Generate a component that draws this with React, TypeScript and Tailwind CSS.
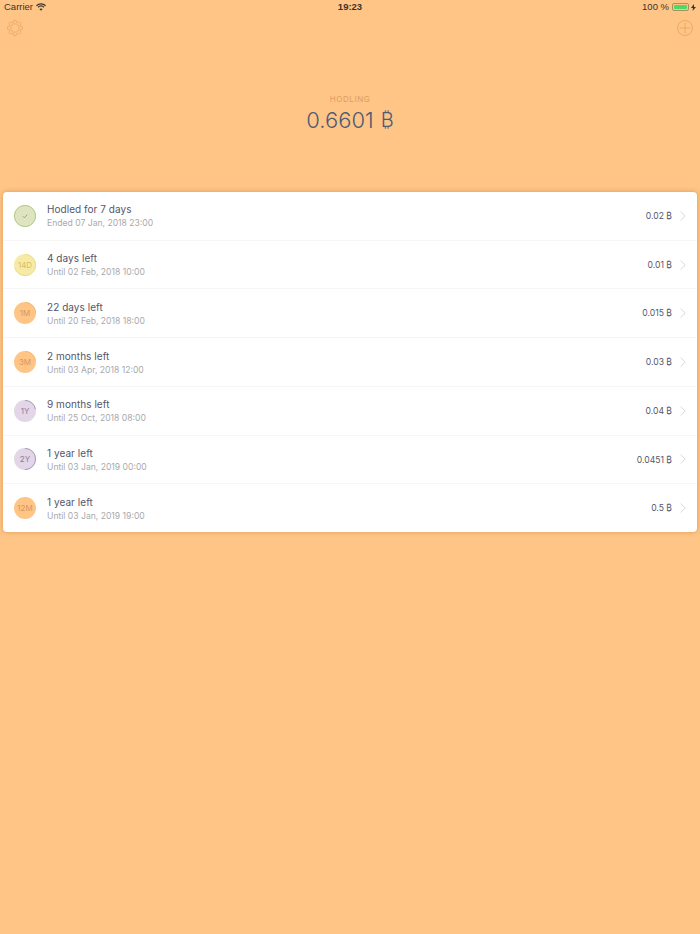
const rows = [
  { t: "Hodled for 7 days", s: "Ended 07 Jan, 2018 23:00", a: "0.02", l: "", fill: "#dde4bf", stroke: "#a9c47e", txt: "#8aa862", p: 1 },
  { t: "4 days left", s: "Until 02 Feb, 2018 10:00", a: "0.01", l: "14D", fill: "#f7eaa8", stroke: "#ecd97a", txt: "#d9bf5a", p: 0.7 },
  { t: "22 days left", s: "Until 20 Feb, 2018 18:00", a: "0.015", l: "1M", fill: "#fec587", stroke: "#f5b470", txt: "#d9975a", p: 0.25 },
  { t: "2 months left", s: "Until 03 Apr, 2018 12:00", a: "0.03", l: "3M", fill: "#fec587", stroke: "#f5b470", txt: "#d9975a", p: 0.22 },
  { t: "9 months left", s: "Until 25 Oct, 2018 08:00", a: "0.04", l: "1Y", fill: "#e3d6e8", stroke: "#9c8aab", txt: "#8d7a9c", p: 0.22 },
  { t: "1 year left", s: "Until 03 Jan, 2019 00:00", a: "0.0451", l: "2Y", fill: "#e3d6e8", stroke: "#9c8aab", txt: "#8d7a9c", p: 0.5 },
  { t: "1 year left", s: "Until 03 Jan, 2019 19:00", a: "0.5", l: "12M", fill: "#fec587", stroke: "#f5b470", txt: "#d9975a", p: 0.02 },
];

const gearPath = (() => {
  const pts: string[] = [];
  for (let i = 0; i < 8; i++) {
    const a = (i * Math.PI) / 4;
    const step = Math.PI / 4;
    [
      [-0.36, 5.9],
      [-0.2, 7.6],
      [0.2, 7.6],
      [0.36, 5.9],
    ].forEach(([f, rad]) => {
      const t = a + f * step;
      pts.push(`${(8 + rad * Math.sin(t)).toFixed(2)} ${(8 - rad * Math.cos(t)).toFixed(2)}`);
    });
  }
  return `M${pts.join("L")}Z`;
})();

function Badge({ r }: { r: (typeof rows)[number] }) {
  const c = 2 * Math.PI * 10.6;
  return (
    <div className="relative w-[22px] h-[22px] shrink-0">
      <svg width="22" height="22" viewBox="0 0 22 22" className="absolute inset-0">
        <circle cx="11" cy="11" r="11" fill={r.fill} />
        <circle
          cx="11"
          cy="11"
          r="10.6"
          fill="none"
          stroke={r.stroke}
          strokeWidth="0.8"
          strokeDasharray={`${c * r.p} ${c}`}
          transform="rotate(-90 11 11)"
        />
        {r.l === "" && <path d="M8.8 11.2l1.6 1.6 2.9-3.2" fill="none" stroke={r.txt} strokeWidth="0.9" />}
      </svg>
      <div className="absolute inset-0 flex items-center justify-center text-[8px]" style={{ color: r.txt }}>
        {r.l}
      </div>
    </div>
  );
}

export default function App() {
  return (
    <div className="w-[700px] h-[934px] bg-[#fec587] overflow-hidden flex flex-col font-['Inter','Liberation_Sans',sans-serif]">
      <div className="h-[14px] px-[4px] flex items-center justify-between text-[9.5px] text-[#3a3330] font-['Liberation_Sans',sans-serif] relative">
        <div className="flex items-center gap-[3px]">
          <span>Carrier</span>
          <svg width="10" height="8" viewBox="0 0 10 8" fill="none" stroke="#3a3330">
            <path d="M.4 2.7C3 .2 7 .2 9.6 2.7" strokeWidth="1.2" />
            <path d="M2 4.3c1.7-1.5 4.3-1.5 6 0" strokeWidth="1.2" />
            <path d="M5 7.7L3.4 6c.9-.8 2.3-.8 3.2 0z" fill="#3a3330" stroke="none" />
          </svg>
        </div>
        <span className="absolute left-0 right-0 text-center font-bold">19:23</span>
        <div className="flex items-center gap-[2px]">
          <span>100 %</span>
          <div className="w-[17px] h-[8px] rounded-[2px] border border-[#a9905f] p-[1px] ml-[1px]">
            <div className="w-full h-full bg-[#4cd964] rounded-[1px]" />
          </div>
          <svg width="5" height="7" viewBox="0 0 5 7">
            <path d="M3 0L0 4h2L1.5 7 5 3H3z" fill="#3a3330" />
          </svg>
        </div>
      </div>
      <div className="h-[28px] px-[7px] flex items-center justify-between">
        <svg width="16" height="16" viewBox="0 0 16 16" fill="none" stroke="#e8a25a" strokeWidth="0.7">
          <path d={gearPath} strokeLinejoin="round" />
          <circle cx="8" cy="8" r="4.2" />
        </svg>
        <svg width="16" height="16" viewBox="0 0 16 16" fill="none" stroke="#e8a25a" strokeWidth="0.8">
          <circle cx="8" cy="8" r="7.5" />
          <path d="M8 2.5v11M2.5 8h11" />
        </svg>
      </div>
      <div className="mt-[51px] flex flex-col items-center">
        <div className="text-[8px] leading-[12px] tracking-[0.6px] text-[#dd9e5e]">HODLING</div>
        <div className="text-[22px] leading-[28px] mt-[1px] text-[#4f5a73] font-light flex items-center gap-[7px]">
          <span>0.6601</span>
          <span className="text-[20px]">₿</span>
        </div>
      </div>
      <div className="mt-[58px] mx-[3px] h-[340px] bg-white rounded-[4px] shadow-[0_0_5px_rgba(190,120,50,0.55)] flex flex-col">
        {rows.map((r, i) => (
          <div key={i} className={`flex-1 flex items-center px-[11px] ${i < 6 ? "border-b border-[#f6f6f6]" : ""}`}>
            <Badge r={r} />
            <div className="ml-[11px] flex-1 min-w-0 pt-[1px]">
              <div className="text-[10px] leading-[13px] text-[#55566a] tracking-[0.05px]">{r.t}</div>
              <div className="text-[8.6px] leading-[12px] mt-[1px] text-[#a9a9ad]">{r.s}</div>
            </div>
            <div className="text-[8.6px] text-[#55566a] mr-[8px] pt-[1px]">{r.a} ₿</div>
            <svg width="6" height="10" viewBox="0 0 6 10" fill="none" stroke="#d8d8d8" strokeWidth="1">
              <path d="M.7.5L5.2 5 .7 9.5" />
            </svg>
          </div>
        ))}
      </div>
    </div>
  );
}
